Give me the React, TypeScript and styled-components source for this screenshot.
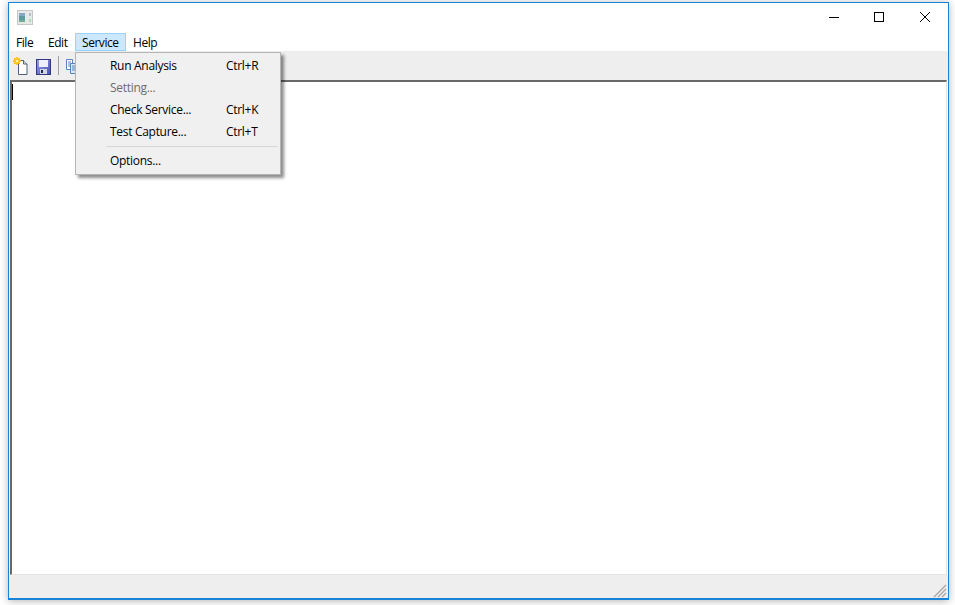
import styled, { createGlobalStyle } from "styled-components";

const GlobalStyle = createGlobalStyle`
  html, body {
    margin: 0;
    padding: 0;
    background: #fff;
  }
  body {
    width: 955px;
    height: 605px;
    overflow: hidden;
    font-family: "Open Sans", "Noto Sans", sans-serif;
    font-size: 12px;
    color: #000;
  }
`;

const Page = styled.div`
  width: 955px;
  height: 605px;
  padding: 2px 6px 5px 8px;
  box-sizing: border-box;
`;

const Window = styled.div`
  position: relative;
  height: 100%;
  box-sizing: border-box;
  border: solid #1883d7;
  border-width: 1px 1px 2px 1px;
  background: #fff;
  box-shadow: 0 1px 8px rgba(0, 0, 0, 0.3);
  display: flex;
  flex-direction: column;
`;

const TitleBar = styled.div`
  height: 30px;
  box-sizing: border-box;
  flex: none;
  display: flex;
  align-items: center;
  padding: 0 1px 2px 8px;
`;

const WindowButtons = styled.div`
  margin-left: auto;
  display: flex;
`;

const WindowButton = styled.div<{ $close?: boolean }>`
  width: 45px;
  height: 28px;
  box-sizing: border-box;
  display: flex;
  align-items: center;
  padding-left: ${(p) => (p.$close ? "18px" : "17px")};
`;

const MenuBar = styled.div`
  height: 18px;
  flex: none;
  display: flex;
`;

const MenuItem = styled.div<{ $open?: boolean; $width: number }>`
  width: ${(p) => p.$width}px;
  height: 18px;
  line-height: 17px;
  padding-left: 6px;
  box-sizing: border-box;
  letter-spacing: -0.45px;
  border: 1px solid ${(p) => (p.$open ? "#99d1ff" : "transparent")};
  background: ${(p) => (p.$open ? "#cce8ff" : "transparent")};
`;

const ToolBar = styled.div`
  height: 29px;
  flex: none;
  background: #eeeeee;
  display: flex;
  align-items: center;
  padding-left: 4px;
  gap: 8px;
`;

const ToolButton = styled.div`
  width: 15px;
  height: 18px;
  display: flex;
`;

const ToolSeparator = styled.div`
  width: 1px;
  height: 19px;
  background: #a0a0a0;
  margin: 0 -1px;
`;

const Editor = styled.div`
  flex: 1;
  border-top: 2px solid #696969;
  border-left: 2px solid #696969;
  border-right: 1px solid #e3e3e3;
  border-bottom: 1px solid #e3e3e3;
  margin: 0 1px 0 1px;
  background: #fff;
  padding: 2px 0 0 0;
`;

const Caret = styled.div`
  width: 1px;
  height: 16px;
  background: #000;
`;

const StatusBar = styled.div`
  height: 23px;
  flex: none;
  background: #eeeeee;
  display: flex;
  justify-content: flex-end;
  align-items: flex-end;
  padding-right: 1px;
`;

const Dropdown = styled.div`
  position: absolute;
  left: 66px;
  top: 49px;
  width: 206px;
  box-sizing: border-box;
  background: #f0f0f0;
  border: 1px solid #b5b5b5;
  box-shadow: 3px 3px 3px rgba(0, 0, 0, 0.45);
  padding: 2px;
`;

const DropdownRow = styled.div<{ $disabled?: boolean }>`
  height: 22px;
  line-height: 21px;
  display: flex;
  padding-left: 32px;
  letter-spacing: -0.3px;
  color: ${(p) => (p.$disabled ? "#6d6d6d" : "#000")};
`;

const RowLabel = styled.span`
  width: 116px;
  flex: none;
`;

const DropdownDivider = styled.div`
  height: 1px;
  background: #d7d7d7;
  margin: 3px 0 3px 28px;
`;

function AppIcon() {
  return (
    <svg width="16" height="15" viewBox="0 0 16 15">
      <rect x="0.5" y="0.5" width="15" height="14" fill="#e8e8e8" stroke="#c6c6c6" />
      <rect x="2" y="3" width="6" height="9" fill="#5f9aa0" />
      <rect x="2" y="3" width="6" height="3" fill="#86a8c4" />
      <rect x="2" y="10" width="6" height="2" fill="#6fae90" />
      <rect x="9" y="3" width="5" height="9" fill="#e4eaec" />
      <rect x="12" y="3" width="2" height="3" fill="#b4c0c6" />
      <rect x="12" y="9" width="2" height="3" fill="#b5d6b0" />
    </svg>
  );
}

function NewIcon() {
  return (
    <svg width="15" height="18" viewBox="0 0 15 18">
      <path d="M5.5 3.5h5l3.5 3.5v10.5h-8.500z" fill="#fff" stroke="#51607a" />
      <path d="M10.5 3.5v3.5h3.5" fill="#d5dde8" stroke="#51607a" />
      <path d="M4 0v8M0 4h8M1.200 1.200l5.600 5.600M6.800 1.200l-5.600 5.600" stroke="#ffb400" strokeWidth="1.300" />
      <circle cx="4" cy="4" r="3" fill="#ffc21a" />
      <circle cx="4" cy="4" r="1.300" fill="#fff3a8" />
    </svg>
  );
}

function SaveIcon() {
  return (
    <svg width="15" height="18" viewBox="0 0 15 18">
      <defs>
        <linearGradient id="saveBody" x1="0" y1="0" x2="1" y2="1">
          <stop offset="0" stopColor="#9aa0e6" />
          <stop offset="1" stopColor="#4a50b4" />
        </linearGradient>
      </defs>
      <rect x="0.5" y="2.5" width="14" height="15" fill="url(#saveBody)" stroke="#34387f" />
      <rect x="3" y="3" width="9" height="7" fill="#eef0fb" />
      <rect x="4" y="12" width="7" height="5" fill="#d2d5e2" />
      <rect x="5" y="13" width="2" height="3" fill="#23265e" />
    </svg>
  );
}

function CopyIcon() {
  return (
    <svg width="16" height="18" viewBox="0 0 16 18" style={{ flex: "none" }}>
      <path d="M0.5 2.5h6v10h-6z" fill="#fff" stroke="#5a83bd" />
      <path d="M2 5h3M2 7h3M2 9h3" stroke="#5a83bd" />
      <path d="M4.5 6.5h6v10h-6z" fill="#dce8f6" stroke="#5a83bd" />
      <path d="M6 9h3M6 11h3M6 13h3" stroke="#5a83bd" />
    </svg>
  );
}

function MinimizeIcon() {
  return (
    <svg width="10" height="10" viewBox="0 0 10 10">
      <path d="M0 5.5h10" stroke="#000" />
    </svg>
  );
}

function MaximizeIcon() {
  return (
    <svg width="10" height="10" viewBox="0 0 10 10">
      <rect x="0.5" y="0.5" width="9" height="9" fill="none" stroke="#000" />
    </svg>
  );
}

function CloseIcon() {
  return (
    <svg width="10" height="10" viewBox="0 0 10 10">
      <path d="M0 0l10 10M10 0L0 10" stroke="#000" />
    </svg>
  );
}

function SizeGrip() {
  return (
    <svg width="14" height="14" viewBox="0 0 14 14">
      <path d="M1 13L13 1M5 13l8-8M9 13l4-4" stroke="#a8a8a8" strokeWidth="1.400" />
    </svg>
  );
}

export default function App() {
  return (
    <Page>
      <GlobalStyle />
      <Window>
        <TitleBar>
          <AppIcon />
          <WindowButtons>
            <WindowButton><MinimizeIcon /></WindowButton>
            <WindowButton><MaximizeIcon /></WindowButton>
            <WindowButton $close><CloseIcon /></WindowButton>
          </WindowButtons>
        </TitleBar>
        <MenuBar>
          <MenuItem $width={32}>File</MenuItem>
          <MenuItem $width={34}>Edit</MenuItem>
          <MenuItem $width={51} $open>Service</MenuItem>
          <MenuItem $width={40}>Help</MenuItem>
        </MenuBar>
        <ToolBar>
          <ToolButton><NewIcon /></ToolButton>
          <ToolButton><SaveIcon /></ToolButton>
          <ToolSeparator />
          <ToolButton><CopyIcon /></ToolButton>
        </ToolBar>
        <Editor>
          <Caret />
        </Editor>
        <StatusBar>
          <SizeGrip />
        </StatusBar>
        <Dropdown>
          <DropdownRow><RowLabel>Run Analysis</RowLabel><span>Ctrl+R</span></DropdownRow>
          <DropdownRow $disabled><RowLabel>Setting...</RowLabel></DropdownRow>
          <DropdownRow><RowLabel>Check Service...</RowLabel><span>Ctrl+K</span></DropdownRow>
          <DropdownRow><RowLabel>Test Capture...</RowLabel><span>Ctrl+T</span></DropdownRow>
          <DropdownDivider />
          <DropdownRow><RowLabel>Options...</RowLabel></DropdownRow>
        </Dropdown>
      </Window>
    </Page>
  );
}
